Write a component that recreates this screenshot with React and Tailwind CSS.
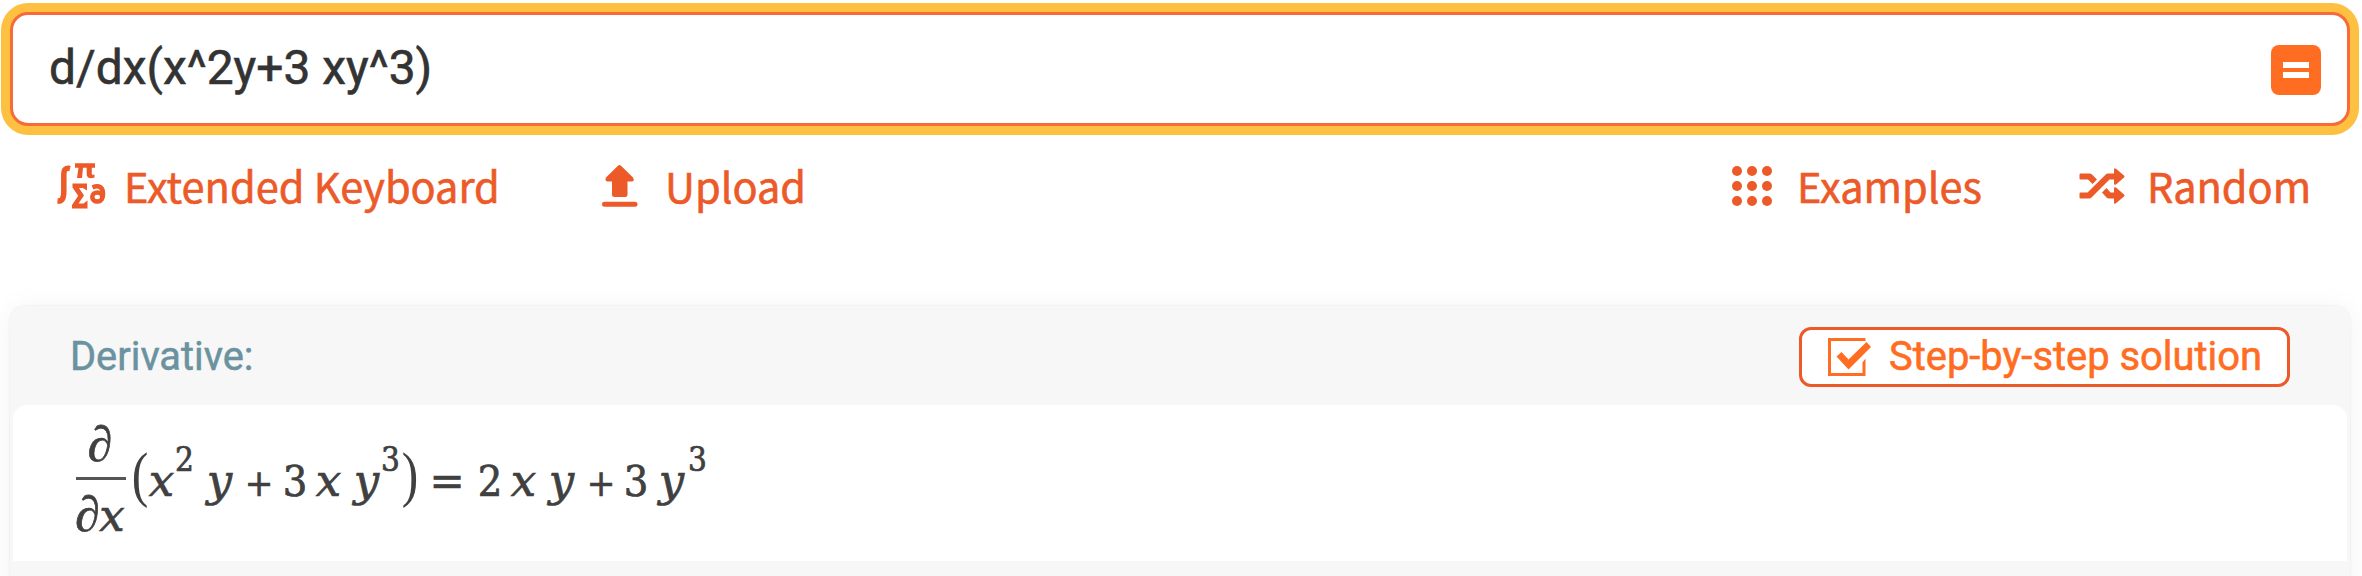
const tool = "flex items-center text-[#ec5a29]";
const toolText =
  "-translate-y-[1.5px] font-['Noto_Sans_CJK_SC',sans-serif] text-[41.5px] leading-[60px] whitespace-nowrap [-webkit-text-stroke:0.6px_currentColor]";

function KeyboardIcon() {
  return (
    <svg className="w-[49px] h-[48px]" viewBox="57 162 49 48" fill="none" stroke="currentColor">
      <path d="M70 168.500C65.500 167.500 63.800 169.500 63.800 175V191C63.800 198 62.500 201.500 57.500 201" strokeWidth="5.500" />
      <path d="M75 163.200H95V167.800H91.800V173.500C91.800 175 92.500 175 94.500 174.500V177.500C90 179 86.700 178 86.700 174V167.800H83L82 178H77L78.500 167.800H75Z" fill="currentColor" stroke="none" />
      <path d="M72.500 183.500H87V190.500L83 188H79L84 195.500L78.500 203.500H83.500L87.500 200.500V208.500H72V205L78.200 195.800L72.500 187.500Z" fill="currentColor" stroke="none" />
      <ellipse cx="97.300" cy="197" rx="5" ry="4.500" strokeWidth="4.600" />
      <path d="M92.500 187.500C99 184.500 103.300 187.500 103 194.500L102.300 198" strokeWidth="4.600" />
    </svg>
  );
}

function UploadIcon() {
  return (
    <svg className="w-[36px] h-[42px]" viewBox="0 0 36 42" fill="currentColor">
      <path d="M16 .8Q17.500-.6 19 .8L31 12.500Q33 16.500 30 16.500H25.500V29.500Q25.500 32 23 32H12.500Q10 32 10 29.500V16.500H5.500Q2.500 16.500 4 12.500Z" />
      <rect x="0" y="36.800" width="35.500" height="5" rx="2.500" />
    </svg>
  );
}

function GridIcon() {
  return (
    <span className="grid grid-cols-3 gap-[5px] w-[40px]">
      {Array.from({ length: 9 }, (_, i) => (
        <span key={i} className="size-[10px] rounded-full bg-[#ec5a29]" />
      ))}
    </span>
  );
}

function ShuffleIcon() {
  return (
    <svg className="w-[46px] h-[36px]" viewBox="0 0 46 36" fill="currentColor">
      <path d="M1.500 5.500H10.500Q12 5.500 13 6.500L18 11.500L13.500 16L9 11.500H1.500Q.5 11.500.5 10.500V6.500Q.5 5.500 1.500 5.500Z" />
      <path d="M1.500 24.500H8.500L26.500 6.800Q27.500 5.500 29 5.500H35V2Q35-.5 37 .8L45 7.500Q46 8.500 45 9.500L37 16.500Q35 17.500 35 15.500V11.500H30.500L13 29Q11.500 30.500 10 30.500H1.500Q.5 30.500.5 29.500V25.500Q.5 24.500 1.500 24.500Z" />
      <path d="M23 24.500L27.500 20L31.500 24.500H35V20.500Q35 18.500 37 19.500L45 26.500Q46 27.500 45 28.500L37 35.300Q35 36.500 35 34.500V30.500H30Q28.500 30.500 27.500 29.500Z" />
    </svg>
  );
}

function CheckIcon() {
  return (
    <svg className="w-[43px] h-[38px]" viewBox="0 0 43 38">
      <path d="M37.500 1.500H1.500V36.500H36" fill="none" stroke="currentColor" strokeWidth="3" />
      <path d="M34.500 38V24.500L37.500 20.500V38Z" fill="currentColor" />
      <path d="M8.500 18.500L13.500 14L20.500 21.500L38.500 4L43 9L20.500 31.500Z" fill="currentColor" />
    </svg>
  );
}

const num = "text-[43px] font-stretch-condensed";
const sup = "text-[33px] font-stretch-condensed -translate-y-[25px]";
const vr = "text-[45px] italic";
const plus = "text-[38px] font-stretch-condensed";
const paren = "font-['Liberation_Serif'] text-[62px] scale-x-[.8] -translate-y-[1px] [-webkit-text-stroke:0px]";

// Each term: glyph, ink width with the gap before it, type style
const terms = [
  ["(", "ml-2 w-[12px]", paren],
  ["x", "ml-[3px] w-[25px]", vr],
  ["2", "ml-[2px] w-[17px]", sup],
  ["y", "ml-[13px] w-[27px]", vr],
  ["+", "ml-[14px] w-[24px]", plus],
  ["3", "ml-[13px] w-[22px]", num],
  ["x", "ml-[10px] w-[25px]", vr],
  ["y", "ml-[12px] w-[27px]", vr],
  ["3", "ml-[2px] w-[17px]", sup],
  [")", "ml-[5px] w-[12px]", paren],
  ["=", "ml-[16px] w-[30px]", "text-[42px]"],
  ["2", "ml-[17px] w-[22px]", num],
  ["x", "ml-[10px] w-[25px]", vr],
  ["y", "ml-[12px] w-[27px]", vr],
  ["+", "ml-[14px] w-[24px]", plus],
  ["3", "ml-[12px] w-[22px]", num],
  ["y", "ml-[11px] w-[27px]", vr],
  ["3", "ml-[4px] w-[17px]", sup],
];

export default function App() {
  return (
    <div className="w-[2362px] h-[576px] overflow-hidden bg-white font-[Roboto,sans-serif]">
      <div className="pt-3 pl-2.5">
        <div className="flex h-[114px] w-[2340px] items-center justify-between rounded-[18px] border-3 border-[#f96a3a] bg-white pr-[26px] pl-[36px] shadow-[0_0_0_9px_#fdc041]">
          <span className="-translate-y-px text-[47.9px] leading-[56px] text-[#333] [-webkit-text-stroke:0.6px_currentColor]">d/dx(x^2y+3 xy^3)</span>
          <button className="mt-[2px] flex size-[50px] flex-col items-center justify-center gap-1 rounded-lg bg-[#ff6d22]">
            <span className="h-1.5 w-[26px] bg-white" />
            <span className="h-1.5 w-[26px] bg-white" />
          </button>
        </div>
      </div>
      <div className="flex h-[180px] w-[2362px] items-start pt-[30px] pl-[57px]">
        <div className={tool + " w-[545px]"}><KeyboardIcon /><span className={toolText + " pl-[18px]"}>Extended Keyboard</span></div>
        <div className={tool + " w-[1130px]"}><UploadIcon /><span className={toolText + " pl-[27px]"}>Upload</span></div>
        <div className={tool + " w-[347px]"}><GridIcon /><span className={toolText + " pl-[25px]"}>Examples</span></div>
        <div className={tool}><ShuffleIcon /><span className={toolText + " pl-[22px]"}>Random</span></div>
      </div>
      <div className="ml-2.5 h-[300px] w-[2340px] rounded-t-[15px] bg-[#f7f7f7] shadow-[0_0_3px_rgba(0,0,0,0.07),0_2px_30px_rgba(0,0,0,0.05)]">
        <div className="flex h-[99px] items-center justify-between px-[60px] pt-[3px]">
          <span className="text-[39.8px] leading-[48px] text-[#6a929f] [-webkit-text-stroke:0.5px_currentColor]">Derivative:</span>
          <button className="flex h-[60px] w-[491px] items-center rounded-xl border-3 border-[#ec5a29] bg-white pl-[26px] text-[#ff6d22]">
            <CheckIcon />
            <span className="pl-[18px] text-[39.9px] leading-[48px] whitespace-nowrap [-webkit-text-stroke:0.6px_currentColor]">Step-by-step solution</span>
          </button>
        </div>
        <div className="mx-[3px] flex h-[156px] rounded-t-[14px] bg-white pl-[63px] font-['DejaVu_Serif',serif] text-[#404040] [-webkit-text-stroke:0.7px_currentColor]">
          <div className="flex w-[50px] flex-col items-center pt-[15px] font-['Liberation_Serif',serif]">
            <i className="h-[57px] -translate-x-px -translate-y-[3px] text-[50px] leading-[54px]">∂</i>
            <span className="h-[3px] w-full bg-[#555]" />
            <span className="flex -translate-x-px items-baseline leading-[68px]">
              <i className="w-[24px] text-[50px]">∂</i>
              <i className="font-['DejaVu_Serif'] text-[45px]">x</i>
            </span>
          </div>
          <div className="flex h-[80px] items-baseline pt-[42px] leading-[56px]">
            {terms.map(([glyph, box, type], i) => (
              <span key={i} className={"flex shrink-0 justify-center " + box + " " + type}>{glyph}</span>
            ))}
          </div>
        </div>
      </div>
    </div>
  );
}
